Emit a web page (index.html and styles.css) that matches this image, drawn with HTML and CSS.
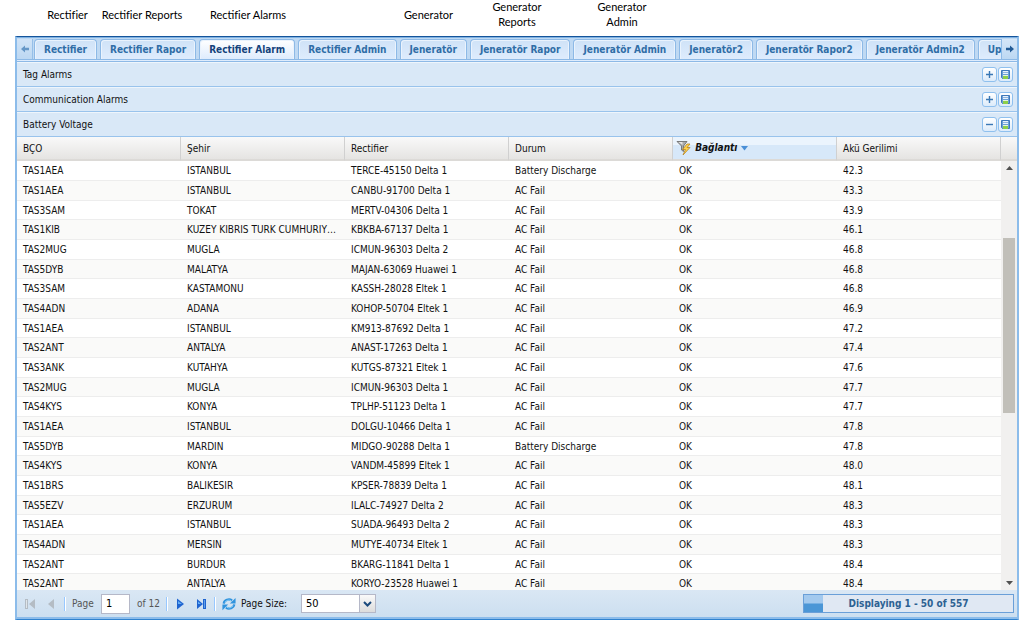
FILE: index.html
```html
<!DOCTYPE html>
<html lang="tr">
<head>
    <meta charset="UTF-8">
    <meta name="viewport" content="width=device-width, initial-scale=1.0">
    <title>Rectifier Alarm</title>
    <link rel="stylesheet" href="styles.css">
</head>
<body>

<!-- icons used more than once -->
<svg class="sprite" width="0" height="0" aria-hidden="true">
    <symbol id="icon-plus" viewBox="0 0 13 13">
        <path d="M6.500 3v7M3 6.500h7" stroke="#3a78b5" stroke-width="1.400" fill="none"/>
    </symbol>
    <symbol id="icon-minus" viewBox="0 0 13 13">
        <path d="M3 6.500h7" stroke="#3a78b5" stroke-width="1.400" fill="none"/>
    </symbol>
    <symbol id="icon-save" viewBox="0 0 13 13">
        <path d="M2.500 2.500h8v8h-7l-1-1z" fill="#6a9fd8" stroke="#3f78b9"/>
        <path d="M4 3h5v3H4z" fill="#e8f2fc"/>
        <path d="M4 4.500h5" stroke="#8fb5de"/>
        <path d="M4 7h5v4H4z" fill="#8cd04a"/>
        <path d="M4 7.500h5" stroke="#e8f5d8"/>
    </symbol>
</svg>

<div class="captions">
    <span>Rectifier</span>
    <span>Rectifier Reports</span>
    <span>Rectifier Alarms</span>
    <span class="gap"></span>
    <span>Generator</span>
    <span>Generator<br>Reports</span>
    <span>Generator<br>Admin</span>
</div>

<div class="panel">
    <div class="tab-bar">
        <button type="button" class="scroller disabled" aria-label="Scroll left" disabled>
            <svg width="8" height="8" viewBox="0 0 10 10"><path d="M0 5l5-4.500v3h5v3H5v3z" fill="#4f87bd"/></svg>
        </button>
        <div class="tabs">
            <button type="button" class="tab">Rectifier</button>
            <button type="button" class="tab">Rectifier Rapor</button>
            <button type="button" class="tab active">Rectifier Alarm</button>
            <button type="button" class="tab">Rectifier Admin</button>
            <button type="button" class="tab">Jeneratör</button>
            <button type="button" class="tab">Jeneratör Rapor</button>
            <button type="button" class="tab">Jeneratör Admin</button>
            <button type="button" class="tab">Jeneratör2</button>
            <button type="button" class="tab">Jeneratör Rapor2</button>
            <button type="button" class="tab">Jeneratör Admin2</button>
            <button type="button" class="tab">Ups</button>
        </div>
        <button type="button" class="scroller" aria-label="Scroll right">
            <svg width="8" height="8" viewBox="0 0 10 10"><path d="M10 5L5 .5v3H0v3h5v3z" fill="#235b96"/></svg>
        </button>
    </div>
    <div class="tab-strip"></div>

    <div class="section">
        <span>Tag Alarms</span>
        <button type="button" class="tool" aria-label="Expand"><svg width="13" height="13"><use href="#icon-plus"/></svg></button>
        <button type="button" class="tool" aria-label="Save"><svg width="13" height="13"><use href="#icon-save"/></svg></button>
    </div>
    <div class="section">
        <span>Communication Alarms</span>
        <button type="button" class="tool" aria-label="Expand"><svg width="13" height="13"><use href="#icon-plus"/></svg></button>
        <button type="button" class="tool" aria-label="Save"><svg width="13" height="13"><use href="#icon-save"/></svg></button>
    </div>
    <div class="section">
        <span>Battery Voltage</span>
        <button type="button" class="tool" aria-label="Collapse"><svg width="13" height="13"><use href="#icon-minus"/></svg></button>
        <button type="button" class="tool" aria-label="Save"><svg width="13" height="13"><use href="#icon-save"/></svg></button>
    </div>

    <div class="grid">
        <div class="grid-view">
            <table>
                <thead>
                    <tr>
                        <th>BÇO</th>
                        <th>Şehir</th>
                        <th>Rectifier</th>
                        <th>Durum</th>
                        <th class="sorted">
                            <svg width="16" height="16" viewBox="0 0 16 16">
                                <path d="M1 1.500h10L7.500 6v5.500l-2-1.500V6z" fill="#a9abab" stroke="#666" stroke-width=".8"/>
                                <path d="M2.500 2h4v3z" fill="#e6e6e6"/>
                                <path d="M11 4L6.500 9.500h3L7 15l7-7.500h-3L14 4z" fill="#ffd24a" stroke="#b98520" stroke-width=".8"/>
                            </svg>
                            Bağlantı
                            <svg width="7" height="5" viewBox="0 0 7 5"><path d="M0 0h7L3.500 4.500z" fill="#4a8fd6"/></svg>
                        </th>
                        <th>Akü Gerilimi</th>
                    </tr>
                </thead>
                <tbody>
                    <tr><td>TAS1AEA</td><td>ISTANBUL</td><td>TERCE-45150 Delta 1</td><td>Battery Discharge</td><td>OK</td><td>42.3</td></tr>
                    <tr><td>TAS1AEA</td><td>ISTANBUL</td><td>CANBU-91700 Delta 1</td><td>AC Fail</td><td>OK</td><td>43.3</td></tr>
                    <tr><td>TAS3SAM</td><td>TOKAT</td><td>MERTV-04306 Delta 1</td><td>AC Fail</td><td>OK</td><td>43.9</td></tr>
                    <tr><td>TAS1KIB</td><td>KUZEY KIBRIS TURK CUMHURIYETI</td><td>KBKBA-67137 Delta 1</td><td>AC Fail</td><td>OK</td><td>46.1</td></tr>
                    <tr><td>TAS2MUG</td><td>MUGLA</td><td>ICMUN-96303 Delta 2</td><td>AC Fail</td><td>OK</td><td>46.8</td></tr>
                    <tr><td>TAS5DYB</td><td>MALATYA</td><td>MAJAN-63069 Huawei 1</td><td>AC Fail</td><td>OK</td><td>46.8</td></tr>
                    <tr><td>TAS3SAM</td><td>KASTAMONU</td><td>KASSH-28028 Eltek 1</td><td>AC Fail</td><td>OK</td><td>46.8</td></tr>
                    <tr><td>TAS4ADN</td><td>ADANA</td><td>KOHOP-50704 Eltek 1</td><td>AC Fail</td><td>OK</td><td>46.9</td></tr>
                    <tr><td>TAS1AEA</td><td>ISTANBUL</td><td>KM913-87692 Delta 1</td><td>AC Fail</td><td>OK</td><td>47.2</td></tr>
                    <tr><td>TAS2ANT</td><td>ANTALYA</td><td>ANAST-17263 Delta 1</td><td>AC Fail</td><td>OK</td><td>47.4</td></tr>
                    <tr><td>TAS3ANK</td><td>KUTAHYA</td><td>KUTGS-87321 Eltek 1</td><td>AC Fail</td><td>OK</td><td>47.6</td></tr>
                    <tr><td>TAS2MUG</td><td>MUGLA</td><td>ICMUN-96303 Delta 1</td><td>AC Fail</td><td>OK</td><td>47.7</td></tr>
                    <tr><td>TAS4KYS</td><td>KONYA</td><td>TPLHP-51123 Delta 1</td><td>AC Fail</td><td>OK</td><td>47.7</td></tr>
                    <tr><td>TAS1AEA</td><td>ISTANBUL</td><td>DOLGU-10466 Delta 1</td><td>AC Fail</td><td>OK</td><td>47.8</td></tr>
                    <tr><td>TAS5DYB</td><td>MARDIN</td><td>MIDGO-90288 Delta 1</td><td>Battery Discharge</td><td>OK</td><td>47.8</td></tr>
                    <tr><td>TAS4KYS</td><td>KONYA</td><td>VANDM-45899 Eltek 1</td><td>AC Fail</td><td>OK</td><td>48.0</td></tr>
                    <tr><td>TAS1BRS</td><td>BALIKESIR</td><td>KPSER-78839 Delta 1</td><td>AC Fail</td><td>OK</td><td>48.1</td></tr>
                    <tr><td>TAS5EZV</td><td>ERZURUM</td><td>ILALC-74927 Delta 2</td><td>AC Fail</td><td>OK</td><td>48.3</td></tr>
                    <tr><td>TAS1AEA</td><td>ISTANBUL</td><td>SUADA-96493 Delta 2</td><td>AC Fail</td><td>OK</td><td>48.3</td></tr>
                    <tr><td>TAS4ADN</td><td>MERSIN</td><td>MUTYE-40734 Eltek 1</td><td>AC Fail</td><td>OK</td><td>48.3</td></tr>
                    <tr><td>TAS2ANT</td><td>BURDUR</td><td>BKARG-11841 Delta 1</td><td>AC Fail</td><td>OK</td><td>48.4</td></tr>
                    <tr><td>TAS2ANT</td><td>ANTALYA</td><td>KORYO-23528 Huawei 1</td><td>AC Fail</td><td>OK</td><td>48.4</td></tr>
                </tbody>
            </table>
        </div>
        <div class="grid-side">
            <div class="head-end"></div>
            <div class="scrollbar">
                <svg width="7" height="4" viewBox="0 0 7 4"><path d="M0 4h7L3.500 0z" fill="#505050"/></svg>
                <div class="track"><div class="thumb"></div></div>
                <svg width="7" height="4" viewBox="0 0 7 4"><path d="M0 0h7L3.500 4z" fill="#505050"/></svg>
            </div>
        </div>
    </div>

    <div class="paging">
        <button type="button" class="nav" aria-label="First page" disabled>
            <svg width="12" height="12" viewBox="0 0 12 12"><path d="M1 1h3v10H1zM11 1v10L5 6z" fill="#b4bcc4"/><path d="M2 2h1v8H2z" fill="#dfe5ea"/></svg>
        </button>
        <button type="button" class="nav" aria-label="Previous page" disabled>
            <svg width="12" height="12" viewBox="0 0 12 12"><path d="M10 1v10L4 6z" fill="#b4bcc4"/></svg>
        </button>
        <span class="separator"></span>
        <label class="muted page-label" for="page">Page</label>
        <input type="text" id="page" class="page" value="1">
        <span class="muted page-count">of 12</span>
        <span class="separator"></span>
        <button type="button" class="nav" aria-label="Next page">
            <svg width="12" height="12" viewBox="0 0 12 12"><path d="M3 .5v11L10 6z" fill="#1f64d0"/><path d="M4 3v3h4z" fill="#63aef5"/></svg>
        </button>
        <button type="button" class="nav" aria-label="Last page">
            <svg width="12" height="12" viewBox="0 0 12 12"><path d="M3 1v10l6-5z" fill="#1f64d0"/><path d="M4 3.500V6h3z" fill="#63aef5"/><path d="M9 1h3v10H9z" fill="#1f64d0"/><path d="M10 2h1v8h-1z" fill="#5f9fe8"/></svg>
        </button>
        <span class="separator"></span>
        <button type="button" class="refresh" aria-label="Refresh">
            <svg width="14" height="14" viewBox="0 0 16 16">
                <path d="M2 7.500C2.500 3.500 8 1.500 11.500 4" stroke="#2f93de" stroke-width="2.600" fill="none"/>
                <path d="M15.500 1v6.500H9z" fill="#2f93de"/>
                <path d="M14 8.500c-.5 4-6 6-9.500 3.500" stroke="#2f93de" stroke-width="2.600" fill="none"/>
                <path d="M.5 15V8.500H7z" fill="#2f93de"/>
                <path d="M3.500 6C5 3.500 8 3 10.500 4.200M12.500 10C11 12.500 8 13 5.500 11.800" stroke="#9ad7f8" fill="none"/>
            </svg>
        </button>
        <label class="size-label" for="pageSize">Page Size:</label>
        <div class="combo">
            <select id="pageSize">
                <option>25</option>
                <option selected>50</option>
                <option>100</option>
            </select>
            <span class="trigger"><svg width="9" height="6" viewBox="0 0 9 6"><path d="M1 1l3.500 3.500L8 1" stroke="#1c4a7c" stroke-width="2" fill="none"/></svg></span>
        </div>
        <div class="progress">
            <div class="bar" style="width: 9%"></div>
            <span class="progress-text">Displaying 1 - 50 of 557</span>
        </div>
    </div>
</div>

</body>
</html>
```
FILE: styles.css
```css
* {
    box-sizing: border-box;
}
body {
    margin: 0;
    padding: 0 5px 6px 15px;
    height: 100vh;
    display: flex;
    flex-direction: column;
    background: #fff;
    color: #111;
    font-family: "DejaVu Sans Condensed", Tahoma, sans-serif;
    font-size: 10px;
}
button, input, select {
    margin: 0;
    padding: 0;
    font: inherit;
}
button {
    border: none;
    background: none;
}
svg {
    display: block;
}
.sprite {
    position: absolute;
}

/* captions above the tabs */
.captions {
    display: grid;
    grid-template-columns: 65px 84px 128px 68px 97px 80px 130px;
    align-items: center;
    align-content: center;
    height: 36px;
    padding: 0 0 8px 20px;
    text-align: center;
    font-family: Lato, sans-serif;
    font-size: 11px;
    line-height: 15px;
    color: #000;
}

.panel {
    flex: 1;
    min-height: 0;
    display: flex;
    flex-direction: column;
    border: 2px solid #8cbcea;
    border-top: 1px solid #15549b;
    border-bottom: 1px solid #2f82cf;
    background: #d9e8f7;
}

/* tabs */
.tab-bar {
    display: flex;
    height: 22px;
    padding-top: 1px;
    background: #bfd9f3;
    border-top: 1px solid #7fb2e2;
}
.tabs {
    flex: 1;
    min-width: 0;
    display: flex;
    gap: 3px;
    padding-left: 1px;
    overflow: hidden;
}
.tab {
    flex: none;
    padding: 0 9px 1px;
    border: 1px solid #8db9e6;
    border-bottom: none;
    border-radius: 4px 4px 0 0;
    background: linear-gradient(#cfe2f7, #deecfd);
    box-shadow: inset 1px 1px 0 #eaf3fd, inset -1px 0 0 #eaf3fd;
    color: #2f6da6;
    font-weight: bold;
    white-space: nowrap;
}
.tab.active {
    background: linear-gradient(#fff, #deecfd);
    color: #15437b;
}
.scroller {
    width: 16px;
    display: flex;
    align-items: center;
    justify-content: center;
    border-right: 1px solid #8db9e6;
    background: linear-gradient(#d5e6f8, #bcd8f3);
}
.scroller:last-child {
    border-right: none;
    border-left: 1px solid #8db9e6;
}
.scroller.disabled {
    opacity: 0.8;
}
.tab-strip {
    height: 3px;
    border-top: 1px solid #8db9e6;
    border-bottom: 1px solid #8db9e6;
    background: #deecfd;
}

/* collapsible sections */
.section {
    display: flex;
    align-items: center;
    gap: 1px;
    height: 25px;
    padding: 0 4px 0 6px;
    border-top: 1px solid #eef5fc;
    border-bottom: 1px solid #99c3ec;
    background: #d9e8f7;
}
.section span {
    flex: 1;
}
.tool {
    width: 15px;
    height: 15px;
    border: 1px solid #8fc0ee;
    border-radius: 3px;
    background: linear-gradient(#fff, #dcebfa);
}

/* grid */
.grid {
    flex: 1;
    min-height: 0;
    display: flex;
    background: #fff;
}
.grid-view {
    flex: 1;
    min-width: 0;
    overflow: hidden;
}
table {
    width: 100%;
    table-layout: fixed;
    border-collapse: separate;
    border-spacing: 0;
}
th, td {
    padding: 0 6px;
    text-align: left;
    white-space: nowrap;
    overflow: hidden;
    text-overflow: ellipsis;
}
th, .head-end {
    height: 24px;
    border-right: 1px solid #d0d0d0;
    border-bottom: 2px solid #dcdad7;
    background: linear-gradient(#f9f9f9, #e5e4e2);
    font-weight: normal;
}
.head-end {
    border-right: none;
}
th.sorted {
    padding-left: 3px;
    background: linear-gradient(#ebf4fd 35%, #d7e8f9 36%);
    font-weight: bold;
    font-style: italic;
}
th svg {
    display: inline-block;
    vertical-align: middle;
}
td {
    height: 20px;
    border-bottom: 1px solid #ededed;
}
tr:nth-child(3n) td {
    height: 19px;
}
tbody tr:nth-child(even) {
    background: #fafaf9;
}
.grid-side {
    width: 16px;
    display: flex;
    flex-direction: column;
}
.scrollbar {
    flex: 1;
    display: flex;
    flex-direction: column;
    align-items: center;
    padding: 5px 2px;
    background: #f1f0ef;
}
.track {
    flex: 1;
    width: 100%;
    padding-top: 68px;
}
.thumb {
    height: 51%;
    background: #c1bfb9;
}

/* paging toolbar */
.paging {
    display: flex;
    align-items: center;
    height: 29px;
    padding: 0 3px 0 7px;
    border-bottom: 2px solid #8cbcea;
    background: linear-gradient(#dae7f4, #ccdff0);
}
.nav {
    width: 12px;
    margin-right: 8px;
}
.separator {
    width: 2px;
    height: 14px;
    margin-right: 6px;
    border-left: 1px solid #98c8ff;
    border-right: 1px solid #fff;
}
.muted {
    color: #555;
}
.page-label {
    width: 29px;
}
.page {
    width: 29px;
    height: 20px;
    padding: 0 4px;
    border: 1px solid #b5b8c8;
    background: #fff;
    font-size: 11px;
}
.page-count {
    width: 36px;
    padding-left: 7px;
}
.refresh {
    width: 14px;
}
.size-label {
    width: 65px;
    padding-left: 5px;
}
.combo {
    position: relative;
    width: 75px;
    height: 19px;
}
.combo select {
    appearance: none;
    width: 100%;
    height: 100%;
    padding: 0 4px;
    border: 1px solid #b5b8c8;
    border-radius: 0;
    background: #fff;
    font-size: 11px;
}
.trigger {
    position: absolute;
    top: 0;
    right: 0;
    width: 17px;
    height: 100%;
    display: flex;
    align-items: center;
    justify-content: center;
    border: 1px solid #b5b8c8;
    background: linear-gradient(#fafafa, #dcdcdc);
    pointer-events: none;
}
.progress {
    position: relative;
    width: 211px;
    height: 19px;
    margin-left: auto;
    border: 1px solid #6a9fd8;
    background: #e0e8f3;
}
.bar {
    height: 100%;
    background: linear-gradient(#a3c9ee 45%, #4b96d6 55%);
}
.progress-text {
    position: absolute;
    inset: 0;
    line-height: 17px;
    text-align: center;
    color: #2c6192;
    font-weight: bold;
}
```
